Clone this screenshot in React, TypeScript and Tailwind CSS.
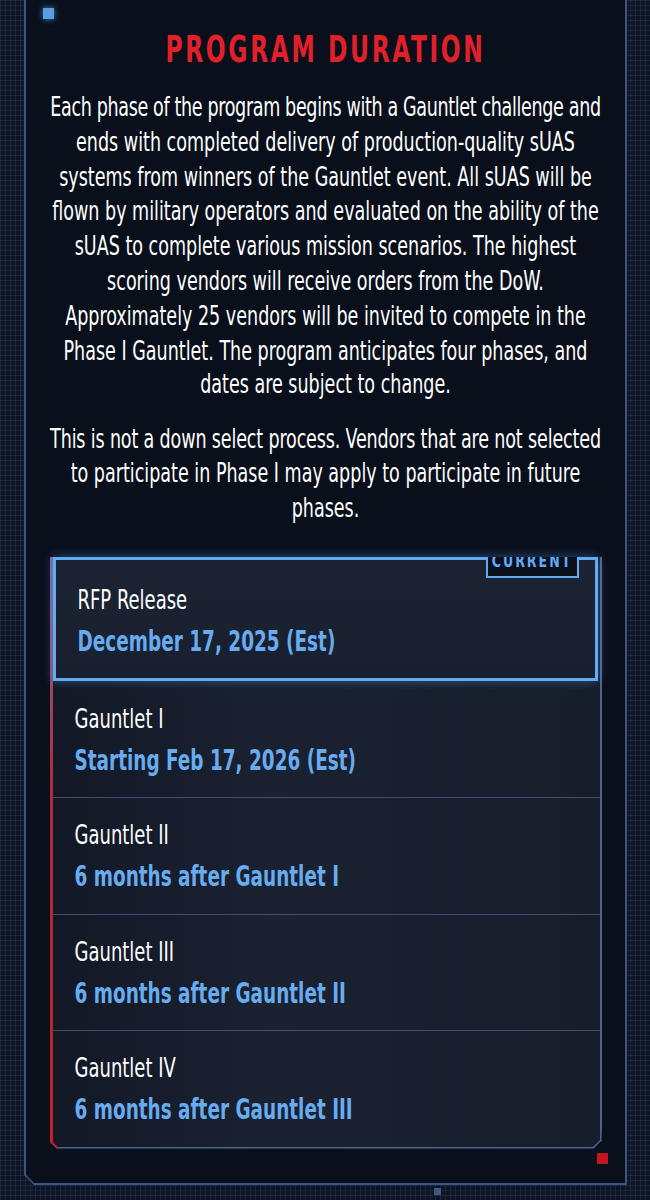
const items = [
  { label: "RFP Release", date: "December 17, 2025 (Est)", current: true },
  { label: "Gauntlet I", date: "Starting Feb 17, 2026 (Est)" },
  { label: "Gauntlet II", date: "6 months after Gauntlet I" },
  { label: "Gauntlet III", date: "6 months after Gauntlet II" },
  { label: "Gauntlet IV", date: "6 months after Gauntlet III" },
];

// condensed face, stretched a bit to get the tall look of the original
const font = "font-['DejaVu_Sans_Condensed','Liberation_Sans',sans-serif]";

function Row({ label, date }: { label: string; date: string }) {
  return (
    <div className="flex flex-col gap-[18px]">
      <div className="h-[24px] origin-top scale-y-[1.37] whitespace-nowrap text-[20px] leading-[24px] text-white">
        {label}
      </div>
      <div className="h-[24px] origin-top scale-y-[1.37] whitespace-nowrap text-[20.5px] font-bold leading-[24px] text-[#68acf0]">
        {date}
      </div>
    </div>
  );
}

function Corner({ className, flip }: { className: string; flip?: boolean }) {
  return (
    <svg className={`absolute ${className}`} viewBox="0 0 10 10">
      {flip ? (
        <line x1="10" y1="0" x2="0" y2="10" strokeWidth="3" />
      ) : (
        <line x1="0" y1="0" x2="10" y2="10" strokeWidth="3" />
      )}
    </svg>
  );
}

export default function App() {
  return (
    <div
      className={`flex h-[1200px] w-[650px] flex-col overflow-hidden bg-[#0d1524] bg-[linear-gradient(rgba(80,110,150,0.18)_1px,transparent_1px),linear-gradient(90deg,rgba(80,110,150,0.18)_1px,transparent_1px)] bg-[size:5px_5px] pl-[24px] ${font}`}
    >
      <section className="relative flex h-[1185px] w-[603px] shrink-0 flex-col items-center border-x-2 border-b-2 border-[#3b5680] bg-[#0a0f1c] px-[24px] pt-[28px] [clip-path:polygon(0_0,100%_0,100%_100%,10px_100%,0_calc(100%-10px))]">
        <Corner className="bottom-[-2px] left-[-2px] h-[10px] w-[10px] stroke-[#3b5680]" />
        <div className="absolute left-[17px] top-[8px] h-[11px] w-[11px] bg-[#5a9ee0] shadow-[0_0_6px_#3b7fd0]" />
        <div className="absolute right-[17px] bottom-[19px] h-[11px] w-[11px] bg-[#c4161c]" />

        <h1 className="h-[30px] origin-top scale-y-[1.42] text-center text-[26px] font-bold leading-[30px] tracking-[2.6px] text-[#e2202a]">
          PROGRAM DURATION
        </h1>

        <div className="flex flex-col gap-[20px] pt-[33px] pb-[32px]">
          <div className="h-[312px]">
            <p className="origin-top scale-y-[1.4] whitespace-nowrap text-center text-[19.5px] leading-[24.8px] text-white">
              <span className="tracking-[-0.35px]">
                Each phase of the program begins with a Gauntlet challenge and
              </span>
              <br />
              ends with completed delivery of production-quality sUAS
              <br />
              systems from winners of the Gauntlet event. All sUAS will be
              <br />
              flown by military operators and evaluated on the ability of the
              <br />
              sUAS to complete various mission scenarios. The highest
              <br />
              scoring vendors will receive orders from the DoW.
              <br />
              Approximately 25 vendors will be invited to compete in the
              <br />
              Phase I Gauntlet. The program anticipates four phases, and
              <br />
              dates are subject to change.
            </p>
          </div>
          <div className="h-[102px]">
            <p className="origin-top scale-y-[1.4] whitespace-nowrap text-center text-[19.5px] leading-[24.3px] text-white">
              <span className="tracking-[-0.15px]">
                This is not a down select process. Vendors that are not selected
              </span>
              <br />
              to participate in Phase I may apply to participate in future
              <br />
              phases.
            </p>
          </div>
        </div>

        <div className="relative flex w-[552px] border-r-2 border-b-2 border-[#4a6690] bg-[linear-gradient(90deg,#121826,#1a2130_40%,#161d2b)] [clip-path:polygon(-20px_-20px,calc(100%+20px)_-20px,100%_calc(100%-8px),calc(100%-8px)_100%,7px_100%,0_calc(100%-7px))]">
          <div className="w-[3px] shrink-0 bg-[linear-gradient(#7d6a9a,#b02a3a_40%,#c41e2a)]" />
          <Corner className="bottom-[-2px] left-0 h-[8px] w-[8px] stroke-[#c41e2a]" />
          <Corner flip className="bottom-[-2px] right-[-2px] h-[9px] w-[9px] stroke-[#4a6690]" />
          <ul className="flex flex-1 flex-col">
            {items.map((it, i) =>
              it.current ? (
                <li
                  key={it.label}
                  className="relative mr-[2px] h-[124px] border-[3px] border-[#62aaf2] bg-[linear-gradient(180deg,#1c2434,#182030)] pl-[22px] pt-[23px] shadow-[0_0_10px_rgba(80,160,240,0.45)]"
                >
                  <div className="absolute right-[16px] top-[-3px] h-[21px] w-[93px] overflow-hidden border-x-2 border-b-2 border-[#62aaf2] bg-[#0a0f1c]">
                    <div className="absolute inset-x-0 top-[-2px] origin-bottom scale-y-[1.3] text-center text-[14px] font-bold leading-[16px] tracking-[2px] text-[#62aaf2]">
                      CURRENT
                    </div>
                  </div>
                  <Row label={it.label} date={it.date} />
                </li>
              ) : (
                <li
                  key={it.label}
                  className={
                    i === 1
                      ? "h-[116px] pl-[22px] pt-[21px]"
                      : "h-[116.5px] border-t border-[#3f5070] pl-[22px] pt-[20px]"
                  }
                >
                  <Row label={it.label} date={it.date} />
                </li>
              ),
            )}
          </ul>
        </div>
      </section>
      <div className="ml-[410px] mt-[3px] h-[7px] w-[7px] bg-[#3a5a80]" />
    </div>
  );
}
